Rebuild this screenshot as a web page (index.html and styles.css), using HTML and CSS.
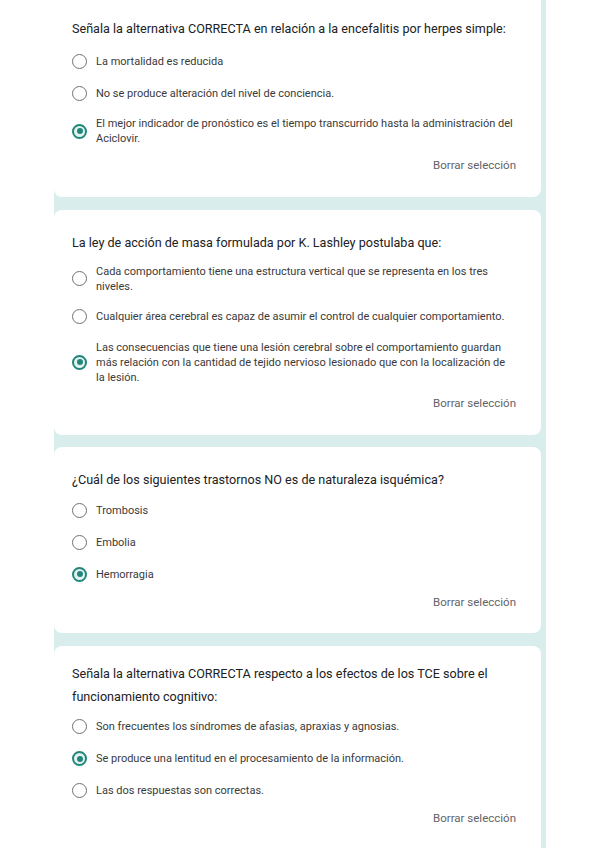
FILE: index.html
```html
<!DOCTYPE html>
<html lang="es">
<head>
<meta charset="utf-8">
<title>Formulario</title>
<link rel="stylesheet" href="styles.css">
</head>
<body>
<div class="column">
  <section class="card first">
    <h2 class="title">Señala la alternativa CORRECTA en relación a la encefalitis por herpes simple:</h2>
    <div class="options">
      <label class="opt"><span class="radio"></span><span class="txt">La mortalidad es reducida</span></label>
      <label class="opt"><span class="radio"></span><span class="txt">No se produce alteración del nivel de conciencia.</span></label>
      <label class="opt"><span class="radio on"></span><span class="txt">El mejor indicador de pronóstico es el tiempo transcurrido hasta la administración del Aciclovir.</span></label>
    </div>
    <div class="clear">Borrar selección</div>
  </section>
  <section class="card">
    <h2 class="title">La ley de acción de masa formulada por K. Lashley postulaba que:</h2>
    <div class="options">
      <label class="opt"><span class="radio"></span><span class="txt">Cada comportamiento tiene una estructura vertical que se representa en los tres niveles.</span></label>
      <label class="opt"><span class="radio"></span><span class="txt">Cualquier área cerebral es capaz de asumir el control de cualquier comportamiento.</span></label>
      <label class="opt"><span class="radio on"></span><span class="txt">Las consecuencias que tiene una lesión cerebral sobre el comportamiento guardan más relación con la cantidad de tejido nervioso lesionado que con la localización de la lesión.</span></label>
    </div>
    <div class="clear">Borrar selección</div>
  </section>
  <section class="card">
    <h2 class="title">¿Cuál de los siguientes trastornos NO es de naturaleza isquémica?</h2>
    <div class="options">
      <label class="opt"><span class="radio"></span><span class="txt">Trombosis</span></label>
      <label class="opt"><span class="radio"></span><span class="txt">Embolia</span></label>
      <label class="opt"><span class="radio on"></span><span class="txt">Hemorragia</span></label>
    </div>
    <div class="clear">Borrar selección</div>
  </section>
  <section class="card last">
    <h2 class="title">Señala la alternativa CORRECTA respecto a los efectos de los TCE sobre el funcionamiento cognitivo:</h2>
    <div class="options">
      <label class="opt"><span class="radio"></span><span class="txt">Son frecuentes los síndromes de afasias, apraxias y agnosias.</span></label>
      <label class="opt"><span class="radio on"></span><span class="txt">Se produce una lentitud en el procesamiento de la información.</span></label>
      <label class="opt"><span class="radio"></span><span class="txt">Las dos respuestas son correctas.</span></label>
    </div>
    <div class="clear">Borrar selección</div>
  </section>
</div>
</body>
</html>
```
FILE: styles.css
```css
html, body {
  margin: 0;
  padding: 0;
  background: #ffffff;
  height: 100%;
  overflow: hidden;
}
body {
  font-family: Roboto, "Liberation Sans", sans-serif;
  color: #202124;
}
.column {
  margin-left: 54px;
  width: 492px;
  min-height: 100%;
  background: #d9eeec;
  display: flex;
  flex-direction: column;
  gap: 12.5px;
}
.card {
  width: 469px;
  background: #ffffff;
  border-radius: 8px;
  padding: 21px 0 23.5px 18px;
}
.card.first {
  border-top-left-radius: 0;
  border-top-right-radius: 0;
  padding-top: 16.5px;
  padding-bottom: 24.5px;
}
.card.last {
  flex: 1;
  padding-top: 16px;
  border-bottom-left-radius: 0;
  border-bottom-right-radius: 0;
}
.title {
  margin: 0 0 8.5px 0;
  font-family: Roboto, "Liberation Sans", sans-serif;
  font-weight: 400;
  font-size: 12.6px;
  line-height: 23px;
  color: #202124;
  width: 448px;
}
.card.first .title {
  margin-bottom: 11px;
}
.options {
  display: flex;
  flex-direction: column;
  gap: 11px;
}
.opt {
  display: flex;
  align-items: center;
  box-sizing: border-box;
  min-height: 21px;
  padding: 1.5px 0;
  gap: 9px;
}
.radio {
  flex: none;
  box-sizing: border-box;
  width: 15px;
  height: 15px;
  border: 1.5px solid #707070;
  border-radius: 50%;
  position: relative;
}
.radio.on {
  border: 2px solid #23867c;
  background: #e3f1ef;
}
.radio.on::after {
  content: "";
  position: absolute;
  left: 50%;
  top: 50%;
  width: 6px;
  height: 6px;
  margin: -3px 0 0 -3px;
  border-radius: 50%;
  background: #23867c;
}
.txt {
  font-size: 11px;
  line-height: 15px;
  color: #3a3a3a;
  width: 418px;
}
.clear {
  margin-top: 10px;
  width: 444px;
  text-align: right;
  font-size: 11.5px;
  line-height: 15px;
  color: #5f6368;
}
```
